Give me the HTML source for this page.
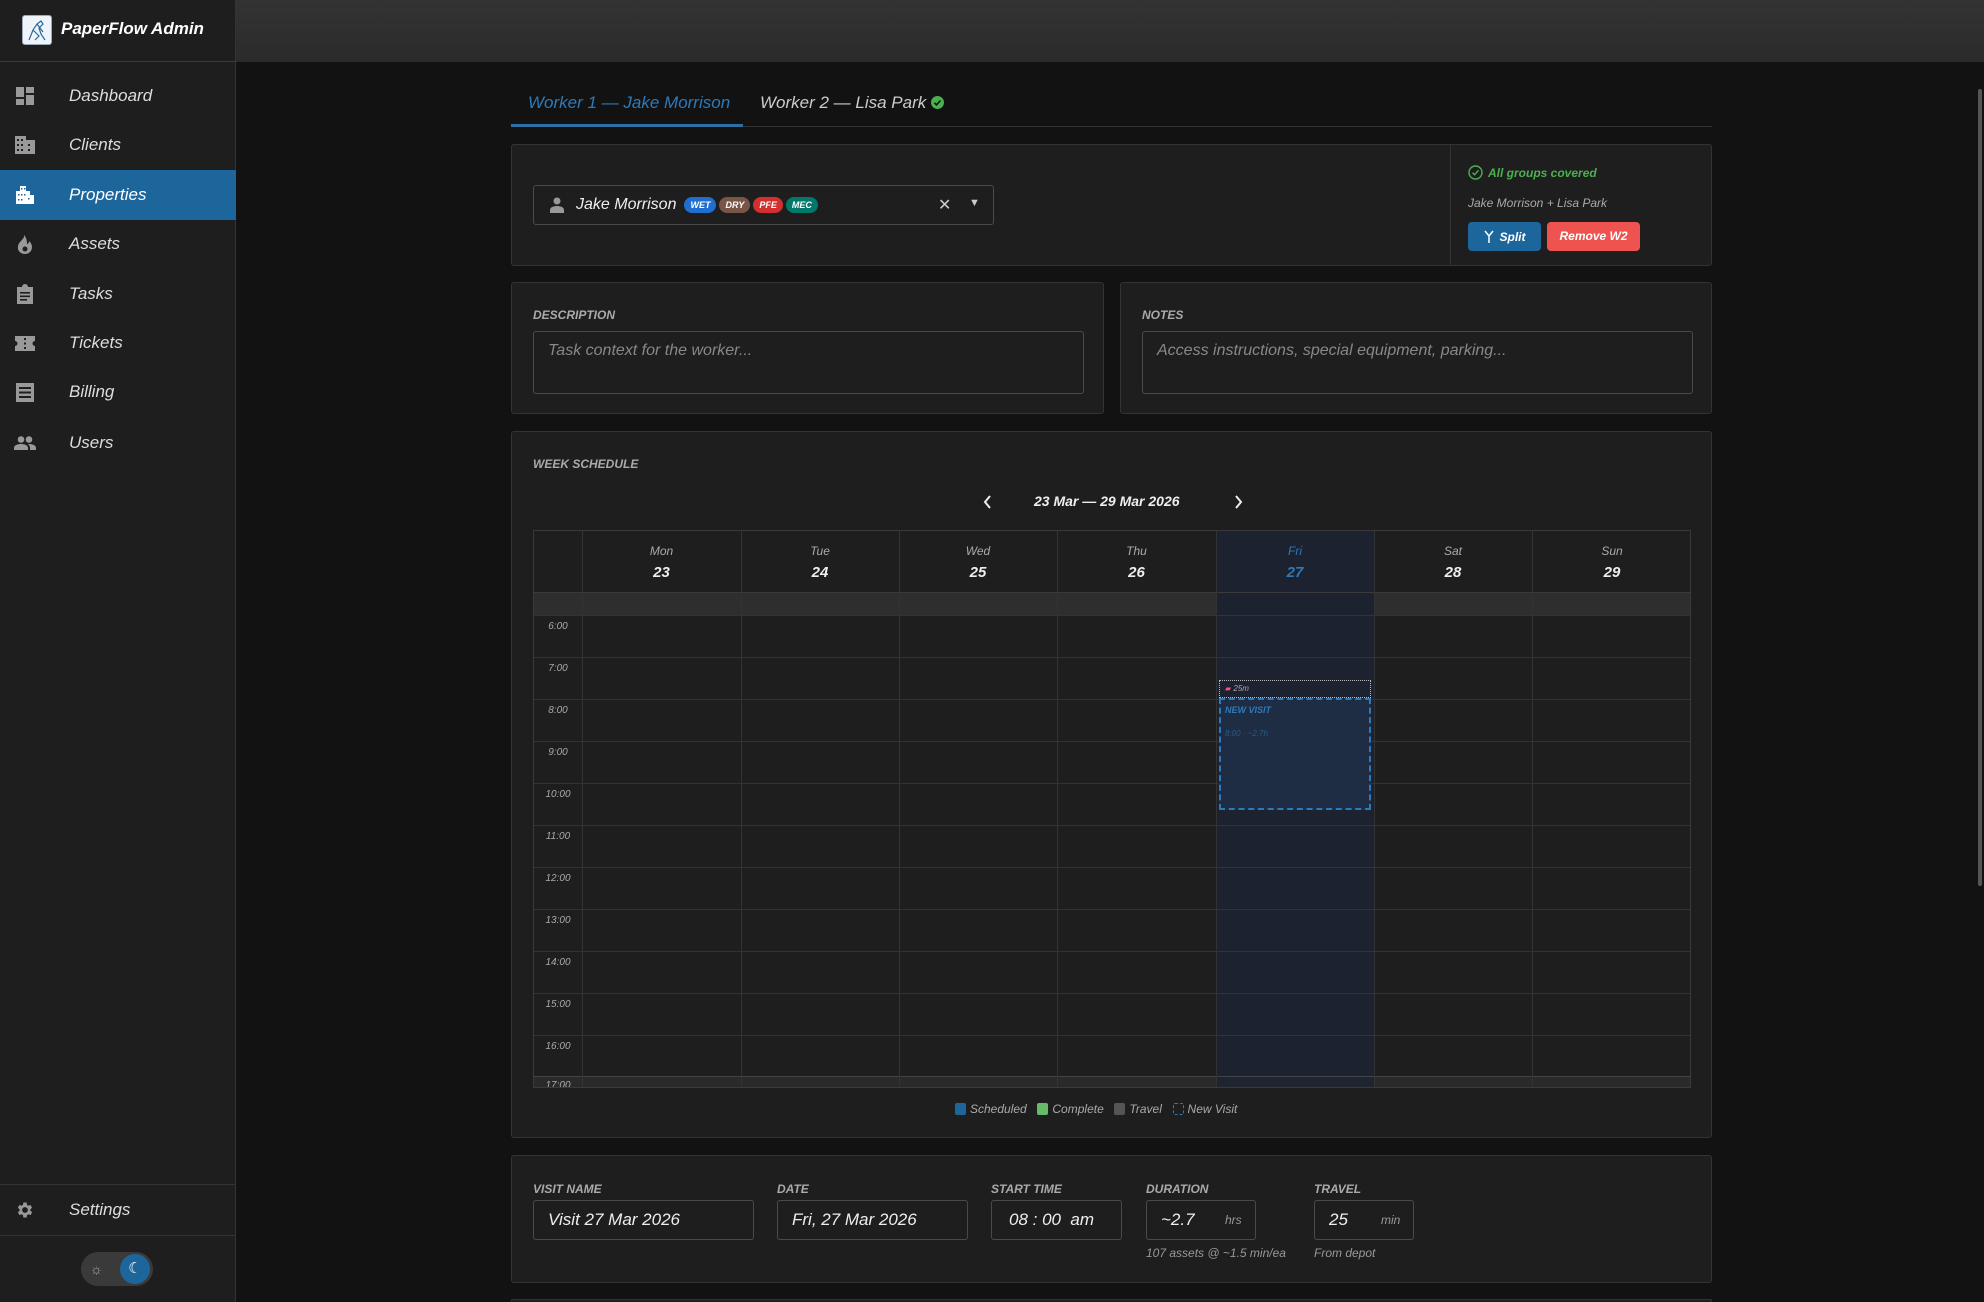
<!DOCTYPE html>
<html><head><meta charset="utf-8"><style>
*{box-sizing:border-box;margin:0;padding:0}
html,body{width:1984px;height:1302px;overflow:hidden}
body{background:#121212;font-family:"Liberation Sans",sans-serif;font-style:italic;color:#ddd;position:relative}
.abs{position:absolute}
#side{left:0;top:0;width:236px;height:1302px;background:#1e1e1e;border-right:1px solid #333}
#hdr{left:236px;top:0;width:1748px;height:62px;background:linear-gradient(#333,#2b2b2b)}
.brand{left:0;top:0;width:236px;height:62px;border-bottom:1px solid #3a3a3a}
.nav{left:0;width:236px;height:50px;display:flex;align-items:center;font-size:17px;color:#ddd}
.nav .ic{width:24px;margin-left:13px;margin-right:32px;display:flex;justify-content:center}
.nav.act{background:#1d669c;color:#fff}
.card{position:absolute;background:#1e1e1e;border:1px solid #333;border-radius:3px}
.lbl{font-size:12px;font-weight:bold;color:#aaa;position:absolute}
.inp{position:absolute;border:1px solid #4a4a4a;border-radius:3px;background:#1e1e1e;font-size:17px;color:#eee;display:flex;align-items:center;padding-left:14px}
.chip{display:inline-block;font-size:9px;font-weight:bold;color:#fff;border-radius:8px;padding:3px 6px;margin-left:3px}
.vl{position:absolute;top:0;bottom:0;width:1px;background:#333}
.hl{position:absolute;left:0;right:0;height:1px;background:#333}
.tm{position:absolute;left:0;width:48px;text-align:center;font-size:10px;color:#aaa}
</style></head><body>
<div id="side" class="abs">
 <div class="abs brand">
  <div class="abs" style="left:22px;top:15px;width:30px;height:30px;background:#eef4fa;border-radius:3px;border:1px solid #9ab">
   <svg width="28" height="28" viewBox="0 0 28 28"><path d="M6 24 L10 14 L14 8 L18 5 L20 8 L16 12 L18 18 L22 24 M10 14 L16 20 L12 24 M14 8 L20 16" stroke="#2a6a9a" stroke-width="1.2" fill="none"/></svg>
  </div>
  <div class="abs" style="left:61px;top:19px;font-size:17px;font-weight:bold;color:#fff">PaperFlow Admin</div>
 </div>
 <div class="abs nav" style="top:71px"><span class="ic"><svg width="18" height="18" viewBox="0 0 18 18" fill="#999"><rect x="0" y="0" width="8" height="10"/><rect x="10" y="0" width="8" height="6"/><rect x="0" y="12" width="8" height="6"/><rect x="10" y="8" width="8" height="10"/></svg></span>Dashboard</div>
 <div class="abs nav" style="top:120px"><span class="ic"><svg width="20" height="18" viewBox="0 0 20 18" fill="#999"><path d="M0 0h11v4h9v14H0z"/><g fill="#1e1e1e"><rect x="2" y="3" width="2" height="2"/><rect x="6" y="3" width="2" height="2"/><rect x="2" y="8" width="2" height="2"/><rect x="6" y="8" width="2" height="2"/><rect x="2" y="13" width="2" height="2"/><rect x="6" y="13" width="2" height="2"/><rect x="13" y="8" width="2" height="2"/><rect x="13" y="13" width="2" height="2"/></g></svg></span>Clients</div>
 <div class="abs nav act" style="top:170px"><span class="ic"><svg width="18" height="18" viewBox="0 0 18 18" fill="#fff"><path d="M4 0h6v5h4v4h4v9H0V5h4z"/><g fill="#1d669c"><rect x="5" y="2" width="1.5" height="1.5"/><rect x="8" y="2" width="1.5" height="1.5"/><rect x="2" y="8" width="1.5" height="1.5"/><rect x="5" y="8" width="1.5" height="1.5"/><rect x="8" y="8" width="1.5" height="1.5"/><rect x="12" y="12" width="1.5" height="1.5"/><rect x="2" y="13" width="1.5" height="1.5"/><rect x="5" y="13" width="1.5" height="1.5"/></g></svg></span>Properties</div>
 <div class="abs nav" style="top:219px"><span class="ic"><svg width="16" height="19" viewBox="0 0 16 19" fill="#999"><path d="M7 0C8 4 2 6 1 11c-1 5 3 8 7 8s7-3 7-7c0-3-2-5-3-6 0 2-1 3-2 3C10 5 9 2 7 0z"/><circle cx="8" cy="14" r="2.5" fill="#1e1e1e"/></svg></span>Assets</div>
 <div class="abs nav" style="top:269px"><span class="ic"><svg width="16" height="20" viewBox="0 0 16 20" fill="#999"><path d="M0 3h5a3 3 0 0 1 6 0h5v17H0z"/><g fill="#1e1e1e"><rect x="3" y="8" width="10" height="1.6"/><rect x="3" y="11.5" width="10" height="1.6"/><rect x="3" y="15" width="7" height="1.6"/></g></svg></span>Tasks</div>
 <div class="abs nav" style="top:318px"><span class="ic"><svg width="20" height="15" viewBox="0 0 20 15" fill="#999"><path d="M0 0h20v5a2.5 2.5 0 0 0 0 5v5H0v-5a2.5 2.5 0 0 0 0-5z"/><g fill="#1e1e1e"><rect x="9" y="2" width="2" height="2"/><rect x="9" y="6.5" width="2" height="2"/><rect x="9" y="11" width="2" height="2"/></g></svg></span>Tickets</div>
 <div class="abs nav" style="top:367px"><span class="ic"><svg width="18" height="19" viewBox="0 0 18 19" fill="#999"><path d="M0 0h18v19H0z"/><g fill="#1e1e1e"><rect x="3" y="4" width="12" height="2"/><rect x="3" y="8.5" width="12" height="2"/><rect x="3" y="13" width="12" height="2"/></g></svg></span>Billing</div>
 <div class="abs nav" style="top:418px"><span class="ic"><svg width="22" height="14" viewBox="0 0 22 14" fill="#999"><circle cx="7" cy="3.5" r="3.3"/><circle cx="15" cy="3.5" r="3.3"/><path d="M0 14v-2c0-3 4-4 7-4s7 1 7 4v2zM15 8c3 0 7 1 7 4v2h-6v-2c0-2-1-3-2-4z"/></svg></span>Users</div>
 <div class="abs" style="left:0;top:1184px;width:236px;height:1px;background:#333"></div>
 <div class="abs nav" style="top:1185px"><span class="ic"><svg width="20" height="20" viewBox="0 0 24 24" fill="#999"><path d="M19.4 13a7.5 7.5 0 0 0 0-2l2.1-1.6-2-3.5-2.5 1a7 7 0 0 0-1.7-1L15 3h-4l-.4 2.9a7 7 0 0 0-1.7 1l-2.5-1-2 3.5L6.5 11a7.5 7.5 0 0 0 0 2l-2.1 1.6 2 3.5 2.5-1a7 7 0 0 0 1.7 1L11 21h4l.4-2.9a7 7 0 0 0 1.7-1l2.5 1 2-3.5zM13 15.5a3.5 3.5 0 1 1 0-7 3.5 3.5 0 0 1 0 7z" transform="translate(-1 0)"/></svg></span>Settings</div>
 <div class="abs" style="left:0;top:1235px;width:236px;height:1px;background:#333"></div>
 <div class="abs" style="left:81px;top:1252px;width:72px;height:34px;border-radius:17px;background:#3a3a3a">
  <div class="abs" style="left:9px;top:9px;font-size:14px;color:#aaa;font-style:normal">☼</div>
  <div class="abs" style="left:39px;top:2px;width:30px;height:30px;border-radius:15px;background:#1d669c;color:#fff;font-size:15px;text-align:center;line-height:30px;font-style:normal">☾</div>
 </div>
</div>
<div id="hdr" class="abs"></div>
<div class="abs" style="left:1978px;top:89px;width:4px;height:797px;background:#555;border-radius:2px"></div>

<div class="abs" style="left:511px;top:126px;width:1201px;height:1px;background:#333"></div>
<div class="abs" style="left:511px;top:124px;width:232px;height:3px;background:#2e6fa3"></div>
<div class="abs" style="left:528px;top:93px;font-size:17px;color:#2e7ab8">Worker 1 — Jake Morrison</div>
<div class="abs" style="left:760px;top:93px;font-size:17px;color:#ccc">Worker 2 — Lisa Park <svg width="13" height="13" viewBox="0 0 13 13" style="vertical-align:-1px"><circle cx="6.5" cy="6.5" r="6.5" fill="#4caf50"/><path d="M3.5 6.8l2 2 4-4.3" stroke="#111" stroke-width="1.6" fill="none"/></svg></div>

<div class="card" style="left:511px;top:144px;width:1201px;height:122px">
 <div class="abs" style="left:938px;top:0;width:1px;height:120px;background:#333"></div>
 <div class="inp" style="left:21px;top:40px;width:461px;height:40px;padding-left:16px;font-size:16px">
  <svg width="14" height="16" viewBox="0 0 14 16" fill="#999" style="margin-right:12px"><circle cx="7" cy="4" r="3.5"/><path d="M0 16v-3c0-3 4-4 7-4s7 1 7 4v3z"/></svg>
  Jake Morrison
  <span class="chip" style="background:#1e6fd0;margin-left:8px">WET</span><span class="chip" style="background:#795548">DRY</span><span class="chip" style="background:#d32f2f">PFE</span><span class="chip" style="background:#00796b">MEC</span>
  <span class="abs" style="left:404px;top:9px;font-style:normal;color:#ccc">✕</span>
  <span class="abs" style="left:435px;top:11px;font-style:normal;color:#ccc;font-size:11px">▼</span>
 </div>
 <div class="abs" style="left:956px;top:20px;font-size:12px;font-weight:bold;color:#4caf50;display:flex;align-items:center;gap:5px"><svg width="15" height="15" viewBox="0 0 15 15"><circle cx="7.5" cy="7.5" r="6.5" stroke="#4caf50" stroke-width="1.4" fill="none"/><path d="M4.5 7.7l2 2 4-4.4" stroke="#4caf50" stroke-width="1.4" fill="none"/></svg>All groups covered</div>
 <div class="abs" style="left:956px;top:51px;font-size:12px;color:#aaa">Jake Morrison + Lisa Park</div>
 <div class="abs" style="left:956px;top:77px;width:73px;height:29px;border-radius:4px;background:#1d669c;color:#fff;font-size:12px;font-weight:bold;display:flex;align-items:center;justify-content:center;gap:6px"><svg width="10" height="13" viewBox="0 0 10 13"><path d="M1 1l4 5 4-5M5 6v7" stroke="#fff" stroke-width="1.5" fill="none"/></svg>Split</div>
 <div class="abs" style="left:1035px;top:77px;width:93px;height:29px;border-radius:4px;background:#ef5350;color:#fff;font-size:12px;font-weight:bold;line-height:29px;text-align:center">Remove W2</div>
</div>

<div class="card" style="left:511px;top:282px;width:593px;height:132px">
 <div class="lbl" style="left:21px;top:25px">DESCRIPTION</div>
 <div class="inp" style="left:21px;top:48px;width:551px;height:63px;align-items:flex-start;padding-top:10px;color:#888;font-size:16px">Task context for the worker...</div>
</div>
<div class="card" style="left:1120px;top:282px;width:592px;height:132px">
 <div class="lbl" style="left:21px;top:25px">NOTES</div>
 <div class="inp" style="left:21px;top:48px;width:551px;height:63px;align-items:flex-start;padding-top:10px;color:#888;font-size:16px">Access instructions, special equipment, parking...</div>
</div>

<div class="card" style="left:511px;top:431px;width:1201px;height:707px">
 <div class="lbl" style="left:21px;top:25px">WEEK SCHEDULE</div>
 <svg class="abs" style="left:471px;top:63px" width="10" height="14" viewBox="0 0 10 14"><path d="M7 1L2 7l5 6" stroke="#eee" stroke-width="2" fill="none"/></svg>
 <div class="abs" style="left:522px;top:61px;font-size:14px;font-weight:bold;color:#eee">23 Mar — 29 Mar 2026</div>
 <svg class="abs" style="left:721px;top:63px" width="10" height="14" viewBox="0 0 10 14"><path d="M3 1l5 6-5 6" stroke="#eee" stroke-width="2" fill="none"/></svg>
 <div class="abs" style="left:21px;top:98px;width:1158px;height:558px;border:1px solid #3a3a3a;overflow:hidden">
  <div class="abs" style="left:0;top:61px;width:1158px;height:23px;background:#2e2e2e"></div>
  <div class="abs" style="left:682px;top:0;width:158px;height:558px;background:#1d2230"></div>
  <div class="abs" style="left:0;top:545px;width:1158px;height:13px;background:#2a2a2a"></div>
  <div class="abs" style="left:682px;top:545px;width:158px;height:13px;background:#1f2530"></div>
  <div class="hl" style="top:61px;background:#3a3a3a"></div>
  <div class="hl" style="top:84px"></div><div class="hl" style="top:126px"></div><div class="hl" style="top:168px"></div><div class="hl" style="top:210px"></div><div class="hl" style="top:252px"></div><div class="hl" style="top:294px"></div><div class="hl" style="top:336px"></div><div class="hl" style="top:378px"></div><div class="hl" style="top:420px"></div><div class="hl" style="top:462px"></div><div class="hl" style="top:504px"></div><div class="hl" style="top:545px;background:#444"></div>
  <div class="vl" style="left:48px"></div><div class="vl" style="left:207px"></div><div class="vl" style="left:365px"></div><div class="vl" style="left:523px"></div><div class="vl" style="left:682px"></div><div class="vl" style="left:840px"></div><div class="vl" style="left:998px"></div>
  <div class="abs" style="left:48px;top:13px;width:1110px;display:flex;text-align:center">
   <div style="width:159px"><div style="font-size:12px;color:#aaa">Mon</div><div style="font-size:15px;font-weight:bold;color:#eee;margin-top:6px">23</div></div>
   <div style="width:158px"><div style="font-size:12px;color:#aaa">Tue</div><div style="font-size:15px;font-weight:bold;color:#eee;margin-top:6px">24</div></div>
   <div style="width:158px"><div style="font-size:12px;color:#aaa">Wed</div><div style="font-size:15px;font-weight:bold;color:#eee;margin-top:6px">25</div></div>
   <div style="width:159px"><div style="font-size:12px;color:#aaa">Thu</div><div style="font-size:15px;font-weight:bold;color:#eee;margin-top:6px">26</div></div>
   <div style="width:158px"><div style="font-size:12px;color:#2e7ab8">Fri</div><div style="font-size:15px;font-weight:bold;color:#2e7ab8;margin-top:6px">27</div></div>
   <div style="width:158px"><div style="font-size:12px;color:#aaa">Sat</div><div style="font-size:15px;font-weight:bold;color:#eee;margin-top:6px">28</div></div>
   <div style="width:160px"><div style="font-size:12px;color:#aaa">Sun</div><div style="font-size:15px;font-weight:bold;color:#eee;margin-top:6px">29</div></div>
  </div>
  <div class="tm" style="top:90px">6:00</div><div class="tm" style="top:132px">7:00</div><div class="tm" style="top:174px">8:00</div><div class="tm" style="top:216px">9:00</div><div class="tm" style="top:258px">10:00</div><div class="tm" style="top:300px">11:00</div><div class="tm" style="top:342px">12:00</div><div class="tm" style="top:384px">13:00</div><div class="tm" style="top:426px">14:00</div><div class="tm" style="top:468px">15:00</div><div class="tm" style="top:510px">16:00</div><div class="tm" style="top:549px">17:00</div>
  <div class="abs" style="left:685px;top:149px;width:152px;height:18px;border:1px dotted #bbb;font-size:8px;color:#aaa;padding:3px 0 0 5px"><span style="color:#e57;font-style:normal">▰</span> 25m</div>
  <div class="abs" style="left:685px;top:167px;width:152px;height:112px;border:2px dashed #2e7ab8;background:#1e2d44">
   <div style="font-size:9px;font-weight:bold;color:#2e7ab8;margin:5px 0 0 4px">NEW VISIT</div>
   <div style="font-size:8px;color:#2a5a85;margin:14px 0 0 4px">8:00 · ~2.7h</div>
  </div>
 </div>
 <div class="abs" style="left:443px;top:670px;font-size:12px;color:#aaa;display:flex;align-items:center;gap:4px">
  <span style="display:inline-block;width:11px;height:12px;background:#1d669c;border-radius:2px"></span>Scheduled&nbsp;&nbsp;
  <span style="display:inline-block;width:11px;height:12px;background:#66bb6a;border-radius:2px"></span>Complete&nbsp;&nbsp;
  <span style="display:inline-block;width:11px;height:12px;background:#555;border-radius:2px"></span>Travel&nbsp;&nbsp;
  <span style="display:inline-block;width:11px;height:12px;border:1px dashed #2e7ab8;border-radius:2px"></span>New Visit
 </div>
</div>

<div class="card" style="left:511px;top:1155px;width:1201px;height:128px">
 <div class="lbl" style="left:21px;top:26px">VISIT NAME</div>
 <div class="lbl" style="left:265px;top:26px">DATE</div>
 <div class="lbl" style="left:479px;top:26px">START TIME</div>
 <div class="lbl" style="left:634px;top:26px">DURATION</div>
 <div class="lbl" style="left:802px;top:26px">TRAVEL</div>
 <div class="inp" style="left:21px;top:44px;width:221px;height:40px">Visit 27 Mar 2026</div>
 <div class="inp" style="left:265px;top:44px;width:191px;height:40px">Fri, 27 Mar 2026</div>
 <div class="inp" style="left:479px;top:44px;width:131px;height:40px;padding-left:17px">08 : 00 &nbsp;am</div>
 <div class="inp" style="left:634px;top:44px;width:110px;height:40px">~2.7<span class="abs" style="left:78px;top:12px;font-size:12px;color:#999">hrs</span></div>
 <div class="inp" style="left:802px;top:44px;width:100px;height:40px">25<span class="abs" style="left:66px;top:12px;font-size:12px;color:#999">min</span></div>
 <div class="abs" style="left:634px;top:90px;font-size:12px;color:#999">107 assets @ ~1.5 min/ea</div>
 <div class="abs" style="left:802px;top:90px;font-size:12px;color:#999">From depot</div>
</div>
<div class="card" style="left:511px;top:1299px;width:1201px;height:3px;border-bottom:none"></div>
</body></html>
